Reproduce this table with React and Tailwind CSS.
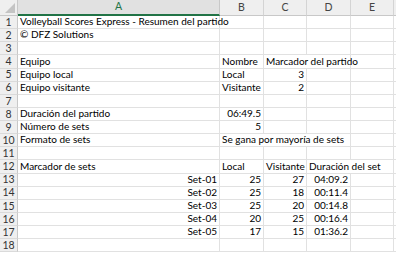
import React from "react";

const COLS = ["A", "B", "C", "D", "E"];

const rows = [
  [{ c: 0, t: "Volleyball Scores Express - Resumen del partido" }],
  [{ c: 0, t: "© DFZ Solutions" }],
  [],
  [{ c: 0, t: "Equipo" }, { c: 1, t: "Nombre" }, { c: 2, t: "Marcador del partido", span: 2 }],
  [{ c: 0, t: "Equipo local" }, { c: 1, t: "Local" }, { c: 2, t: "3", r: true }],
  [{ c: 0, t: "Equipo visitante" }, { c: 1, t: "Visitante" }, { c: 2, t: "2", r: true }],
  [],
  [{ c: 0, t: "Duración del partido" }, { c: 1, t: "06:49.5", r: true }],
  [{ c: 0, t: "Número de sets" }, { c: 1, t: "5", r: true }],
  [{ c: 0, t: "Formato de sets" }, { c: 1, t: "Se gana por mayoría de sets", span: 3 }],
  [],
  [{ c: 0, t: "Marcador de sets" }, { c: 1, t: "Local" }, { c: 2, t: "Visitante" }, { c: 3, t: "Duración del set", span: 2 }],
  ...[
    ["Set-01", "25", "27", "04:09.2"],
    ["Set-02", "25", "18", "00:11.4"],
    ["Set-03", "25", "20", "00:14.8"],
    ["Set-04", "20", "25", "00:16.4"],
    ["Set-05", "17", "15", "01:36.2"],
  ].map((s) => [
    { c: 0, t: s[0], r: true },
    { c: 1, t: s[1], r: true },
    { c: 2, t: s[2], r: true },
    { c: 3, t: s[3], r: true },
  ]),
  [],
];

function buildCells(row) {
  const cells = [];
  let i = 0;
  while (i < 5) {
    const found = row.find((x) => x.c === i);
    if (found) {
      cells.push(found);
      i += found.span || 1;
    } else {
      cells.push({ c: i, t: "" });
      i += 1;
    }
  }
  return cells;
}

const spanClass = { 1: "", 2: "col-span-2", 3: "col-span-3" };

export default function App() {
  return (
    <div
      className="w-[396px] h-[253px] overflow-hidden bg-white text-[10px] text-[#000]"
      style={{ fontFamily: 'Lato, "Liberation Sans", sans-serif' }}
    >
      <div className="grid grid-cols-[18px_202px_44px_43px_44px_43px_1fr] auto-rows-[13.125px] grid-rows-[16px]">
        <div className="relative bg-[#efefef] border-r border-b border-[#c8c8c8]">
          <svg className="absolute right-[2px] bottom-[2px]" width="10" height="10" viewBox="0 0 10 10">
            <polygon points="10,0 10,10 0,10" fill="#c4c4c4" />
          </svg>
        </div>
        {COLS.map((c, idx) =>
          idx === 0 ? (
            <div
              key={c}
              className="flex items-center justify-center bg-[#e1e1e1] border-r border-[#c8c8c8] border-b-2 border-b-[#217346] text-[#217346] text-[10.5px]"
            >
              {c}
            </div>
          ) : (
            <div
              key={c}
              className="flex items-center justify-center bg-[#efefef] border-r border-b border-[#d4d4d4] border-b-[#c8c8c8] text-[#444] text-[10.5px]"
            >
              {c}
            </div>
          )
        )}
        <div className="bg-[#efefef] border-b border-[#c8c8c8]" />

        {rows.map((row, ri) => (
          <React.Fragment key={ri}>
            <div className="flex items-center justify-center bg-[#efefef] border-r border-b border-[#c8c8c8] border-b-[#dadada] text-[#333] text-[10.5px] leading-none">
              {ri + 1}
            </div>
            {buildCells(row).map((cell) => (
              <div
                key={cell.c}
                className={`flex items-end px-[2px] border-r border-b border-[#e1e1e1] whitespace-nowrap leading-[13px] overflow-visible ${
                  spanClass[cell.span || 1]
                } ${cell.r ? "justify-end" : "justify-start"}`}
              >
                {cell.t}
              </div>
            ))}
            <div className="border-b border-[#e1e1e1]" />
          </React.Fragment>
        ))}
      </div>
    </div>
  );
}
